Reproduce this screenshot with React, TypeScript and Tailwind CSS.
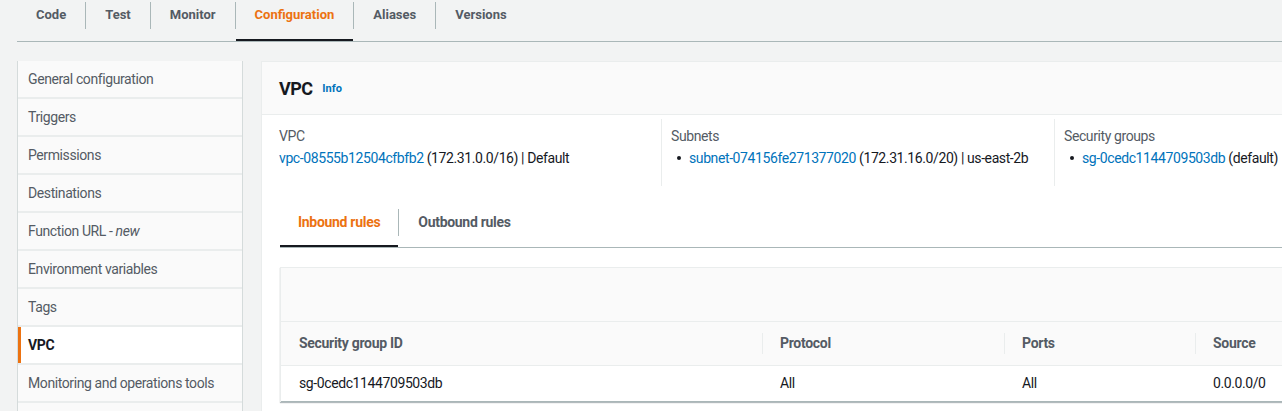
import React from 'react';

const topTabs = ['Code', 'Test', 'Monitor', 'Configuration', 'Aliases', 'Versions'];

const navItems: { label: string; suffix?: string }[] = [
  { label: 'General configuration' },
  { label: 'Triggers' },
  { label: 'Permissions' },
  { label: 'Destinations' },
  { label: 'Function URL - ', suffix: 'new' },
  { label: 'Environment variables' },
  { label: 'Tags' },
  { label: 'VPC' },
  { label: 'Monitoring and operations tools' },
  { label: '' },
];

function TopTabs() {
  return (
    <div className="ml-[17px] flex h-[42px] border-b border-[#aab7b8]">
      {topTabs.map((tab, i) => {
        const active = tab === 'Configuration';
        return (
          <div key={tab} className="flex h-[41px] items-start">
            <div
              className={`h-[41px] border-b-2 px-[19px] ${
                active ? 'border-[#16191f]' : 'border-transparent'
              }`}
            >
              <span
                className={`mt-[1px] block text-[13px] font-bold leading-[27px] ${
                  active ? 'text-[#ec7211]' : 'text-[#545b64]'
                }`}
              >
                {tab}
              </span>
            </div>
            {i < topTabs.length - 1 && <div className="mt-[2px] h-[27px] w-px bg-[#aab7b8]" />}
          </div>
        );
      })}
    </div>
  );
}

function SideNav() {
  return (
    <div className="ml-[17px] flex w-[226px] shrink-0 flex-col gap-[2px] self-start border-x border-[#d5dbdb] bg-[#eaeded]">
      {navItems.map((item, i) => {
        const active = item.label === 'VPC';
        return (
          <div
            key={i}
            className={`flex h-[36px] shrink-0 items-center text-[14px] ${
              active
                ? 'border-l-[3px] border-[#ec7211] bg-white pl-[7px] font-bold tracking-[-0.3px] text-[#16191f]'
                : 'bg-[#fafafa] pl-[10px] tracking-[-0.4px] text-[#545b64]'
            }`}
          >
            {item.label}
            {item.suffix && <em className="ml-[3px]">{item.suffix}</em>}
          </div>
        );
      })}
    </div>
  );
}

function Bullet() {
  return <span className="ml-[6px] mr-[8px] inline-block h-[4px] w-[4px] shrink-0 rounded-full bg-[#16191f]" />;
}

function Details() {
  return (
    <div className="mt-[4px] flex tracking-[-0.4px]">
      <div className="w-[400px] shrink-0 border-r border-[#eaeded] pb-[18px] pl-[17px] pt-[7px]">
        <div className="mb-[2px] text-[14px] leading-[20px] text-[#545b64]">VPC</div>
        <div className="text-[14px] leading-[20px] text-[#16191f]">
          <span className="text-[#0073bb]">vpc-08555b12504cfbfb2</span> (172.31.0.0/16) | Default
        </div>
      </div>
      <div className="w-[393px] shrink-0 border-r border-[#eaeded] pl-[9px] pt-[7px]">
        <div className="mb-[2px] text-[14px] leading-[20px] text-[#545b64]">Subnets</div>
        <div className="flex items-center text-[14px] leading-[20px] text-[#16191f]">
          <Bullet />
          <span>
            <span className="text-[#0073bb]">subnet-074156fe271377020</span> (172.31.16.0/20) | us-east-2b
          </span>
        </div>
      </div>
      <div className="pl-[9px] pt-[7px]">
        <div className="mb-[2px] text-[14px] leading-[20px] text-[#545b64]">Security groups</div>
        <div className="flex items-center whitespace-nowrap text-[14px] leading-[20px] text-[#16191f]">
          <Bullet />
          <span>
            <span className="text-[#0073bb]">sg-0cedc1144709503db</span> (default)
          </span>
        </div>
      </div>
    </div>
  );
}

function RuleTabs() {
  return (
    <div className="ml-[18px] mt-[10px] flex h-[52px] border-b border-[#aab7b8] tracking-[-0.3px]">
      <div className="h-[51px] border-b-2 border-[#16191f] px-[18px]">
        <span className="mt-[13px] block text-[14px] font-bold leading-[27px] text-[#ec7211]">Inbound rules</span>
      </div>
      <div className="mt-[13px] h-[27px] w-px bg-[#aab7b8]" />
      <div className="h-[51px] px-[19px]">
        <span className="mt-[13px] block text-[14px] font-bold leading-[27px] text-[#545b64]">Outbound rules</span>
      </div>
    </div>
  );
}

const columns = ['Security group ID', 'Protocol', 'Ports', 'Source'];
const row = ['sg-0cedc1144709503db', 'All', 'All', '0.0.0.0/0'];

function RulesTable() {
  return (
    <div className="ml-[18px] mt-[19px] border border-b-0 border-[#eaeded] shadow-[0_1px_1px_0_rgba(0,28,36,0.3)]">
      <div className="h-[54px] border-b border-[#eaeded] bg-[#fafafa]" />
      <div className="grid h-[44px] grid-cols-[481px_242px_191px_1fr] border-b border-[#eaeded] bg-[#fafafa]">
        {columns.map((c, i) => (
          <div key={c} className="flex items-center">
            {i > 0 && <div className="h-[21px] w-px bg-[#eaeded]" />}
            <span
              className={`text-[14px] font-bold tracking-[-0.3px] text-[#545b64] ${i > 0 ? 'ml-[17px]' : 'ml-[18px]'}`}
            >
              {c}
            </span>
          </div>
        ))}
      </div>
      <div className="grid h-[36px] grid-cols-[481px_242px_191px_1fr] border-b border-[#aab7b8] bg-white">
        {row.map((v, i) => (
          <div key={i} className="flex items-center">
            <span className="ml-[18px] text-[14px] tracking-[-0.4px] text-[#16191f]">{v}</span>
          </div>
        ))}
      </div>
    </div>
  );
}

export default function App() {
  return (
    <div className="h-[411px] w-[1282px] overflow-hidden bg-[#f2f3f3] font-['Roboto',sans-serif]">
      <TopTabs />
      <div className="mt-[19px] flex gap-[18px]">
        <SideNav />
        <div className="h-[400px] w-[1060px] shrink-0 border border-[#eaeded] bg-white">
          <div className="flex h-[53px] items-center border-b border-[#eaeded] bg-[#fafafa] px-[17px]">
            <span className="text-[18px] font-bold tracking-[-0.6px] text-[#16191f]">VPC</span>
            <span className="ml-[10px] mt-[2px] text-[11px] font-bold text-[#0073bb]">Info</span>
          </div>
          <Details />
          <RuleTabs />
          <RulesTable />
        </div>
      </div>
    </div>
  );
}
